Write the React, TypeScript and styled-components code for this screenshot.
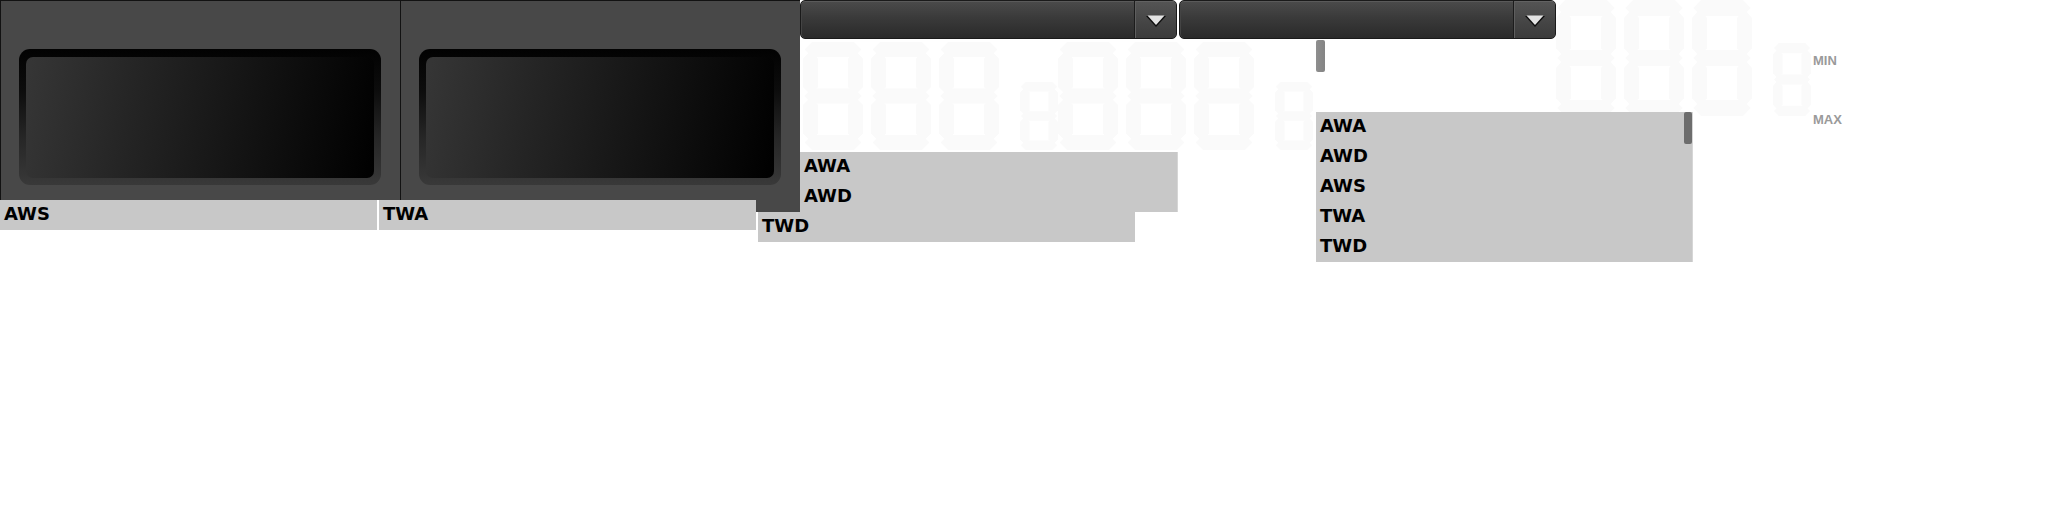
import React from "react";
import styled, { createGlobalStyle } from "styled-components";

const Global = createGlobalStyle`
  html, body { margin: 0; padding: 0; background: #ffffff; }
  body {
    width: 2048px;
    height: 512px;
    overflow: hidden;
    font-family: "DejaVu Sans", "Liberation Sans", sans-serif;
  }
`;

const Page = styled.div`
  display: flex;
  align-items: flex-start;
  width: 2048px;
  height: 512px;
`;

/* ---------- left: gauges ---------- */
const LeftBlock = styled.div`
  display: flex;
  flex-direction: column;
  width: 800px;
  flex-shrink: 0;
`;

const PanelsRow = styled.div`
  display: flex;
  align-items: flex-start;
`;

const Panel = styled.div<{ $h: number }>`
  box-sizing: border-box;
  width: 400px;
  height: ${(p) => p.$h}px;
  background: #484848;
  border-top: 1px solid #121212;
  border-left: 1px solid #121212;
  padding: 48px 19px 0 18px;
`;

const Bezel = styled.div`
  box-sizing: border-box;
  height: 136px;
  border-radius: 11px;
  padding: 8px 7px 7px 7px;
  background: linear-gradient(
    to bottom,
    #020202 0%,
    #0c0c0c 30%,
    #262626 65%,
    #393939 100%
  );
`;

const Screen = styled.div`
  height: 100%;
  border-radius: 7px;
  background: linear-gradient(
    100deg,
    #363636 0%,
    #252525 30%,
    #151515 60%,
    #000000 100%
  );
`;

const LabelsRow = styled.div`
  display: flex;
  gap: 2px;
  margin-top: -12px;
`;

const Label = styled.div<{ $drop?: boolean }>`
  box-sizing: border-box;
  flex: 0 0 377px;
  height: 30px;
  margin-top: ${(p) => (p.$drop ? 12 : 0)}px;
  padding: 0 4px;
  background: #c8c8c8;
  color: #000;
  font: bold 18px "DejaVu Sans", sans-serif;
  line-height: 27px;
`;

/* ---------- middle: selectors, readouts ---------- */
const MiddleBlock = styled.div`
  position: relative;
  display: flex;
  flex-direction: column;
  width: 756px;
  flex-shrink: 0;
`;

const DropRow = styled.div`
  display: flex;
  gap: 2px;
`;

const Dropdown = styled.div`
  box-sizing: border-box;
  display: flex;
  width: 377px;
  height: 39px;
  border: 1px solid #1a1a1a;
  border-radius: 5px;
  overflow: hidden;
  background: linear-gradient(to bottom, #4b4b4b 0%, #3a3a3a 45%, #2a2a2a 100%);
  box-shadow: inset 0 1px 0 #5a5a5a, inset 1px 0 0 #444;
`;

const DropField = styled.div`
  flex: 1;
`;

const DropButton = styled.div`
  box-sizing: border-box;
  width: 42px;
  display: flex;
  align-items: center;
  justify-content: center;
  padding-top: 3px;
  border-left: 1px solid #1c1c1c;
  background: linear-gradient(to bottom, #555 0%, #474747 50%, #3b3b3b 100%);
  box-shadow: inset 1px 0 0 #5e5e5e, inset 0 1px 0 #626262;
`;

const Arrow = () => (
  <svg width="22" height="14" viewBox="0 0 22 14">
    <polygon points="1,2 21,2 11,13" fill="#0e0e0e" />
    <polygon points="2.5,1.5 19.5,1.5 11,11" fill="#e4e4e4" />
  </svg>
);

const DigitsRow = styled.div`
  display: flex;
  margin: 3px 0 0 3px;
`;

const GroupWrap = styled.div<{ $h: number }>`
  display: flex;
  align-items: flex-end;
  width: 255px;
  height: ${(p) => p.$h}px;
  flex-shrink: 0;
`;

const BigDigit = styled.svg<{ $h: number }>`
  display: block;
  width: 60px;
  height: ${(p) => p.$h}px;
  & + & {
    margin-left: 8px;
  }
`;

const SmallDigit = styled.svg<{ $h: number }>`
  display: block;
  width: 38px;
  height: ${(p) => p.$h}px;
  margin-left: 21px;
`;

const W = 60;
const H = 108;
const T = 15;
const G = 1.6;

const hSeg = (c: number) => {
  const x0 = G;
  const x1 = W - G;
  return `${x0},${c} ${x0 + T / 2},${c - T / 2} ${x1 - T / 2},${c - T / 2} ${x1},${c} ${x1 - T / 2},${c + T / 2} ${x0 + T / 2},${c + T / 2}`;
};
const vSeg = (c: number, y0: number, y1: number) =>
  `${c},${y0} ${c + T / 2},${y0 + T / 2} ${c + T / 2},${y1 - T / 2} ${c},${y1} ${c - T / 2},${y1 - T / 2} ${c - T / 2},${y0 + T / 2}`;

const SEGMENTS = [
  hSeg(T / 2),
  hSeg(H / 2),
  hSeg(H - T / 2),
  vSeg(T / 2, T / 2 + G, H / 2 - G),
  vSeg(W - T / 2, T / 2 + G, H / 2 - G),
  vSeg(T / 2, H / 2 + G, H - T / 2 - G),
  vSeg(W - T / 2, H / 2 + G, H - T / 2 - G),
];

const Segs = () => (
  <>
    {SEGMENTS.map((pts, i) => (
      <polygon key={i} points={pts} fill="#fafafa" />
    ))}
  </>
);

const DigitGroup = ({ h }: { h: number }) => (
  <GroupWrap $h={h}>
    {[0, 1, 2].map((i) => (
      <BigDigit key={i} $h={h} viewBox={`0 0 ${W} ${H}`} preserveAspectRatio="none">
        <Segs />
      </BigDigit>
    ))}
    <SmallDigit $h={Math.round(h * 0.63)} viewBox={`0 0 ${W} ${H}`} preserveAspectRatio="none">
      <Segs />
    </SmallDigit>
  </GroupWrap>
);

const Popup = styled.div<{ $w: number }>`
  position: relative;
  box-sizing: border-box;
  width: ${(p) => p.$w}px;
  background: #c8c8c8;
  border-right: 1px solid #d6d6d6;
`;

const FloatingPopup = styled(Popup)`
  position: absolute;
  left: 516px;
  top: 112px;
`;

const PopupList = styled(Popup)`
  margin-top: 2px;
`;

const Item = styled.div`
  height: 30px;
  padding: 0 4px;
  color: #000;
  font: bold 18px "DejaVu Sans", sans-serif;
  line-height: 27px;
`;

const ScrollThumb = styled.div`
  position: absolute;
  top: 0;
  right: 0;
  width: 8px;
  height: 32px;
  border-radius: 2px;
  background: #6d6d6d;
`;

const Handle = styled.div`
  position: absolute;
  left: 516px;
  top: 40px;
  width: 9px;
  height: 32px;
  border-radius: 2px;
  background: linear-gradient(to right, #8e8e8e, #848484);
`;

/* ---------- right: readout with limits ---------- */
const RightBlock = styled.div`
  display: flex;
  align-items: flex-start;
`;

const Limits = styled.div`
  display: flex;
  flex-direction: column;
  gap: 44px;
  padding-top: 53px;
  margin-left: 2px;
  color: #9a9a9a;
  font: bold 13px "Liberation Sans", Arial, sans-serif;
  line-height: 15px;
`;

export default function App() {
  return (
    <>
      <Global />
      <Page>
        <LeftBlock>
          <PanelsRow>
            <Panel $h={200}>
              <Bezel>
                <Screen />
              </Bezel>
            </Panel>
            <Panel $h={212}>
              <Bezel>
                <Screen />
              </Bezel>
            </Panel>
          </PanelsRow>
          <LabelsRow>
            <Label>AWS</Label>
            <Label>TWA</Label>
            <Label $drop>TWD</Label>
          </LabelsRow>
        </LeftBlock>

        <MiddleBlock>
          <DropRow>
            <Dropdown>
              <DropField />
              <DropButton>
                <Arrow />
              </DropButton>
            </Dropdown>
            <Dropdown>
              <DropField />
              <DropButton>
                <Arrow />
              </DropButton>
            </Dropdown>
          </DropRow>
          <DigitsRow>
            <DigitGroup h={108} />
            <DigitGroup h={108} />
          </DigitsRow>
          <PopupList $w={378}>
            <Item>AWA</Item>
            <Item>AWD</Item>
          </PopupList>
          <Handle />
          <FloatingPopup $w={377}>
            <Item>AWA</Item>
            <Item>AWD</Item>
            <Item>AWS</Item>
            <Item>TWA</Item>
            <Item>TWD</Item>
            <ScrollThumb />
          </FloatingPopup>
        </MiddleBlock>

        <RightBlock>
          <DigitGroup h={116} />
          <Limits>
            <span>MIN</span>
            <span>MAX</span>
          </Limits>
        </RightBlock>
      </Page>
    </>
  );
}
